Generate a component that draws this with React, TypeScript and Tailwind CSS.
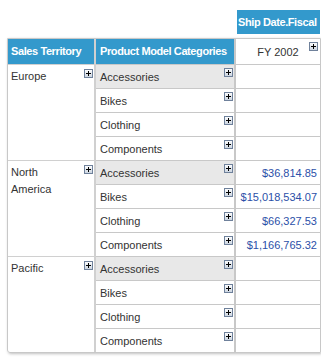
import React from "react";

const groups = [
  { name: ["Europe"], values: ["", "", "", ""] },
  { name: ["North", "America"], values: ["$36,814.85", "$15,018,534.07", "$66,327.53", "$1,166,765.32"] },
  { name: ["Pacific"], values: ["", "", "", ""] },
];

const categories = ["Accessories", "Bikes", "Clothing", "Components"];

function PlusIcon() {
  return (
    <svg width="9" height="9" viewBox="0 0 9 9" className="block">
      <defs>
        <linearGradient id="pg" x1="0" y1="0" x2="0" y2="1">
          <stop offset="0" stopColor="#ffffff" />
          <stop offset="1" stopColor="#c9d3df" />
        </linearGradient>
      </defs>
      <rect x="0.5" y="0.5" width="8" height="8" fill="url(#pg)" stroke="#6f819b" />
      <path d="M2 4.5h5M4.5 2v5" stroke="#000" strokeWidth="1" />
    </svg>
  );
}

export default function App() {
  return (
    <div className="w-[321px] h-[359px] bg-white text-[11px] text-[#333] font-['Liberation_Sans',Arial,sans-serif]">
      <div className="pt-[10px] pl-[237px]">
        <div className="w-[83px] h-[24px] bg-[#3399cc] text-white font-bold flex items-center pl-[1px] whitespace-nowrap overflow-hidden tracking-[-0.4px]">
          Ship Date.Fiscal
        </div>
      </div>
      <div className="ml-[7px] mt-[4px] w-[314px] border border-[#c8c8c8] rounded-bl-[3px] shadow-[1px_1px_3px_rgba(0,0,0,0.25)]">
        {/* header row */}
        <div className="flex h-[25px]">
          <div className="w-[88px] bg-[#3399cc] text-white font-bold flex items-center pl-[3px] border-r-2 border-[#d0d0d0] whitespace-nowrap overflow-hidden tracking-[-0.4px]">
            Sales Territory
          </div>
          <div className="w-[140px] bg-[#3399cc] text-white font-bold flex items-center pl-[4px] border-r-2 border-[#c8c8c8] whitespace-nowrap overflow-hidden tracking-[-0.4px]">
            Product Model Categories
          </div>
          <div className="flex-1 relative flex items-center justify-center pt-[2px]">
            FY 2002
            <div className="absolute right-[2px] top-[3px]">
              <PlusIcon />
            </div>
          </div>
        </div>
        {groups.map((g, gi) => (
          <div key={gi} className="flex">
            <div className="w-[88px] relative pl-[3px] pt-[3px] leading-[17px] border-r-2 border-t border-[#d0d0d0]">
              {g.name.map((n) => (
                <div key={n}>{n}</div>
              ))}
              <div className="absolute right-[1px] top-[4px]">
                <PlusIcon />
              </div>
            </div>
            <div className="flex-1">
              {categories.map((c, ci) => (
                <div key={c} className="flex h-[24px] border-t border-[#c8c8c8]">
                  <div
                    className={
                      "w-[140px] relative flex items-center pl-[4px] pt-[1px] border-r-2 border-[#c8c8c8] " +
                      (ci === 0 ? "bg-[#e8e8e8]" : "")
                    }
                  >
                    {c}
                    <div className="absolute right-[1px] top-[3px]">
                      <PlusIcon />
                    </div>
                  </div>
                  <div className="flex-1 flex items-center justify-end pr-[3px] pt-[1px] text-[#2b4fa8]">
                    {g.values[ci]}
                  </div>
                </div>
              ))}
            </div>
          </div>
        ))}
      </div>
    </div>
  );
}
